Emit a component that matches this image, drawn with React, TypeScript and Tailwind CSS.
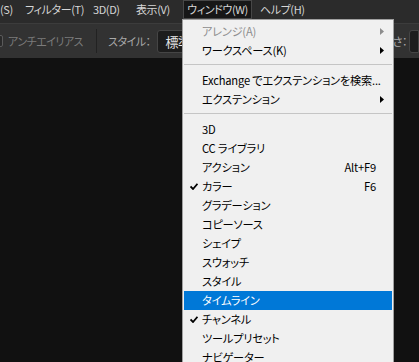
import React from "react";

const font = { fontFamily: '"Noto Sans CJK JP", "Noto Sans", sans-serif', fontFeatureSettings: '"palt"' };

type Item =
  | { sep: true }
  | { label: string; shortcut?: string; check?: boolean; sub?: boolean; disabled?: boolean; active?: boolean };

const items: Item[] = [
  { label: "アレンジ(A)", sub: true, disabled: true },
  { label: "ワークスペース(K)", sub: true },
  { sep: true },
  { label: "Exchange でエクステンションを検索..." },
  { label: "エクステンション", sub: true },
  { sep: true },
  { label: "3D" },
  { label: "CC ライブラリ" },
  { label: "アクション", shortcut: "Alt+F9" },
  { label: "カラー", shortcut: "F6", check: true },
  { label: "グラデーション" },
  { label: "コピーソース" },
  { label: "シェイプ" },
  { label: "スウォッチ" },
  { label: "スタイル" },
  { label: "タイムライン", active: true },
  { label: "チャンネル", check: true },
  { label: "ツールプリセット" },
  { label: "ナビゲーター" },
];

function Check() {
  return (
    <svg width="8" height="7" viewBox="0 0 8 7" className="absolute left-[6px] top-[6px]">
      <path d="M0.5 3.5 L3 6 L7.5 0.8" stroke="#000" strokeWidth="1.8" fill="none" />
    </svg>
  );
}

function Arrow({ gray }: { gray?: boolean }) {
  return (
    <svg width="4" height="7" viewBox="0 0 4 7" className="absolute right-[8px] top-[6px]">
      <path d="M0 0 L4 3.5 L0 7 Z" fill={gray ? "#8d8d8d" : "#000"} />
    </svg>
  );
}

export default function App() {
  return (
    <div className="relative w-[419px] h-[362px] overflow-hidden bg-[#111111] flex flex-col" style={font}>
      {/* Menu bar */}
      <div className="h-[23px] bg-[#2b2b2b] flex items-start text-[11px] tracking-[-0.4px] text-[#d6d6d6] leading-[19px] whitespace-nowrap">
        <span className="w-[25px] shrink-0">(S)</span>
        <span className="w-[68px] shrink-0">フィルター(T)</span>
        <span className="w-[43px] shrink-0">3D(D)</span>
        <span className="w-[47px] shrink-0">表示(V)</span>
        <span className="w-[69px] shrink-0 h-[19px] text-center bg-[#171717] border border-[#474747] leading-[17px]">ウィンドウ(W)</span>
        <span className="ml-[8px]">ヘルプ(H)</span>
      </div>

      {/* Options bar */}
      <div className="h-[35px] bg-[#323232] border-t border-[#3c3c3c] flex items-center text-[11px] tracking-[-0.5px] whitespace-nowrap">
        <div className="w-[12px] h-[12px] -ml-[9px] shrink-0 border border-[#5a5a5a] rounded-[2px] bg-[#2a2a2a]" />
        <span className="ml-[5px] w-[78px] shrink-0 text-[#7b7b7b]">アンチエイリアス</span>
        <div className="ml-[10px] w-[1px] h-[24px] bg-[#222222]" />
        <span className="ml-[11px] text-[#a9a9a9]">スタイル：</span>
        <div className="ml-[6px] w-[60px] h-[23px] bg-[#1d1d1d] border border-[#454545] rounded-[3px] pl-[8px] text-[#e8e8e8] leading-[21px] text-[13px]">
          標準
        </div>
        <span className="ml-auto text-[#a9a9a9]">さ：</span>
        <div className="ml-[2px] w-[10px] h-[23px] bg-[#1d1d1d] border border-[#454545] rounded-l-[3px]" />
      </div>

      <div className="flex-1 bg-[#111111]" />

      {/* Dropdown */}
      <div className="absolute left-[182px] top-[19px] w-[212px] bg-[#f0f0f0] border border-[#a0a0a0] pt-[2px] pb-[2px] text-[11.2px] tracking-[-0.2px]">
        {items.map((it, i) =>
          "sep" in it ? (
            <div key={i} className="pt-[4px] pb-[6px] px-[1px]">
              <div className="h-[1px] bg-[#c5c5c5]" />
            </div>
          ) : (
            <div
              key={i}
              className={
                "relative h-[19px] mx-[1px] pl-[18px] pr-[16px] flex items-center leading-[19px] " +
                (it.active ? "bg-[#0078d7] text-white" : it.disabled ? "text-[#8d8d8d]" : "text-black")
              }
            >
              {it.check && <Check />}
              <span className="flex-1 whitespace-nowrap">{it.label}</span>
              {it.shortcut && <span>{it.shortcut}</span>}
              {it.sub && <Arrow gray={it.disabled} />}
            </div>
          )
        )}
      </div>
    </div>
  );
}
